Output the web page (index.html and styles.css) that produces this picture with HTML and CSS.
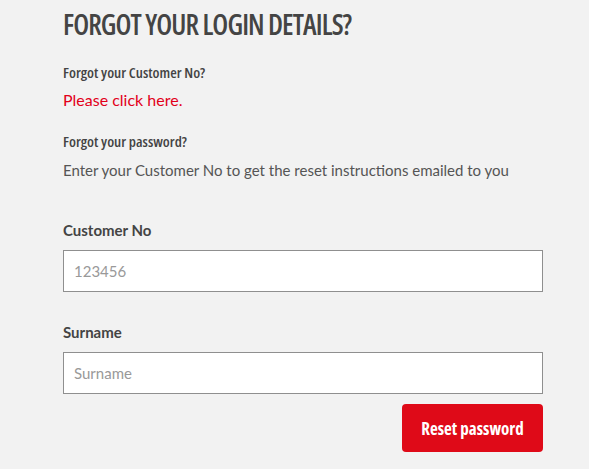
FILE: index.html
```html
<!DOCTYPE html>
<html>
<head>
<meta charset="utf-8">
<link rel="stylesheet" href="styles.css">
</head>
<body>
<main class="panel">
  <h1 class="title">FORGOT YOUR LOGIN DETAILS?</h1>
  <h2 class="subtitle first">Forgot your Customer No?</h2>
  <a class="link" href="#">Please click here.</a>
  <h2 class="subtitle second">Forgot your password?</h2>
  <p class="intro">Enter your Customer No to get the reset instructions emailed to you</p>
  <form class="form">
    <label class="label" for="cust">Customer No</label>
    <input class="field" id="cust" type="text" placeholder="123456">
    <label class="label label-gap" for="surname">Surname</label>
    <input class="field" id="surname" type="text" placeholder="Surname">
    <div class="actions">
      <button class="btn" type="button">Reset password</button>
    </div>
  </form>
</main>
</body>
</html>
```
FILE: styles.css
```css
html, body {
  margin: 0;
  padding: 0;
  background: #f2f2f2;
}
body {
  font-family: Lato, "Open Sans", sans-serif;
  color: #555;
}
.panel {
  width: 480px;
  margin-left: 63px;
  padding-top: 7px;
  display: flex;
  flex-direction: column;
  align-items: flex-start;
}
.title {
  margin: 0;
  font-family: "Open Sans", sans-serif;
  font-stretch: 75%;
  font-weight: 600;
  font-size: 28px;
  line-height: 34px;
  letter-spacing: -0.9px;
  color: #444;
}
.subtitle {
  margin: 0;
  font-family: "Open Sans", sans-serif;
  font-stretch: 75%;
  font-weight: 600;
  font-size: 15px;
  line-height: 20px;
  color: #444;
}
.first { margin-top: 21px; }
.second { margin-top: 21px; }
.link {
  margin-top: 8px;
  font-size: 16px;
  line-height: 20px;
  color: #e2001a;
  text-decoration: none;
}
.intro {
  margin: 9px 0 0;
  font-size: 15px;
  line-height: 20px;
  color: #555;
}
.form {
  width: 100%;
  margin-top: 40px;
  display: flex;
  flex-direction: column;
}
.label {
  font-size: 15px;
  font-weight: 700;
  line-height: 20px;
  color: #444;
}
.label-gap { margin-top: 30px; }
.field {
  margin-top: 10px;
  box-sizing: border-box;
  width: 480px;
  height: 42px;
  border: 1px solid #8f8f8f;
  background: #fff;
  padding: 0 10px;
  font-family: Lato, "Open Sans", sans-serif;
  font-size: 15px;
  color: #333;
  outline: none;
}
.field::placeholder { color: #999; }
.actions {
  display: flex;
  justify-content: flex-end;
  margin-top: 10px;
}
.btn {
  width: 141px;
  height: 48px;
  border: none;
  border-radius: 4px;
  background: #df0a18;
  color: #fff;
  font-family: "Open Sans", sans-serif;
  font-stretch: 75%;
  font-weight: 700;
  font-size: 17px;
  cursor: pointer;
}
```
